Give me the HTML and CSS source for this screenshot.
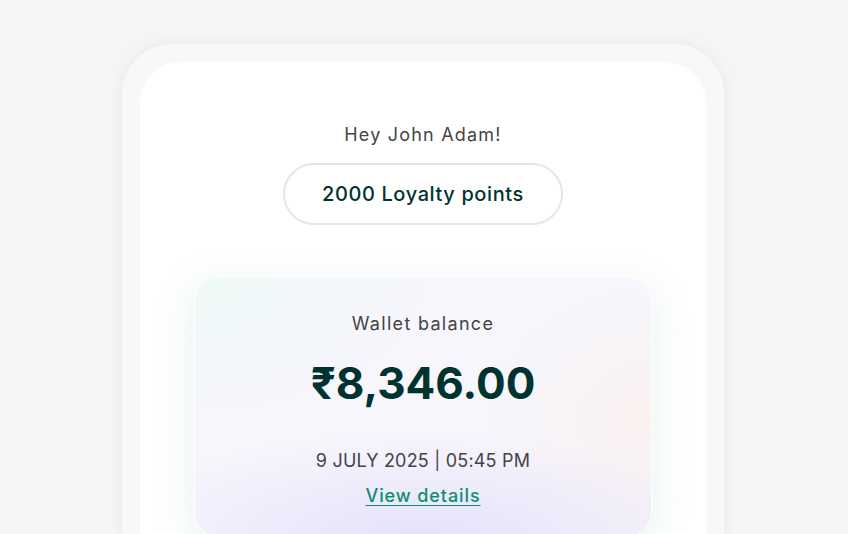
FILE: index.html
```html
<!DOCTYPE html>
<html>
<head>
  <title>Wallet</title>
  <link rel="stylesheet" href="styles.css">
</head>
<body>
  <div class="phone">
    <div class="screen">
      <p class="greeting">Hey John Adam!</p>
      <div class="points">2000 Loyalty points</div>
      <div class="wallet">
        <p class="wallet-label">Wallet balance</p>
        <p class="wallet-amount">&#8377;8,346.00</p>
        <p class="wallet-date">9 JULY 2025 | 05:45 PM</p>
        <a class="wallet-link" href="#">View details</a>
      </div>
    </div>
  </div>
</body>
</html>
```

FILE: styles.css
```css
body {
  margin: 0;
  height: 534px;
  overflow: hidden;
  font-family: Inter, "Noto Sans", sans-serif;
  background-color: #f5f5f5;
}
p {
  margin: 0;
}
.phone {
  width: 566px;
  margin: 44px auto 0;
  padding: 18px 18px 0;
  background-color: #f8f8f9;
  border-radius: 50px 50px 0 0;
  box-shadow: 0 0 14px rgba(0, 0, 0, 0.06);
  position: relative;
  left: -1px;
}
.screen {
  height: 472px;
  background-color: #ffffff;
  border-radius: 40px 40px 0 0;
  display: flex;
  flex-direction: column;
  align-items: center;
  padding-top: 61px;
  box-sizing: border-box;
}
.greeting {
  font-size: 18px;
  color: #454545;
  line-height: 24px;
  letter-spacing: 1.2px;
}
.points {
  flex-shrink: 0;
  margin-top: 16px;
  width: 276px;
  height: 58px;
  border: 2px solid #e6e6e6;
  border-radius: 31px;
  display: flex;
  align-items: center;
  justify-content: center;
  font-size: 20px;
  font-weight: 500;
  letter-spacing: 0.6px;
  color: #00332f;
}
.wallet {
  margin-top: 51px;
  width: 458px;
  height: 262px;
  flex-shrink: 0;
  border: 1px solid #ffffff;
  border-radius: 26px;
  background:
    radial-gradient(ellipse 70% 40% at 50% 100%, rgba(226, 220, 250, 0.8), rgba(226, 220, 250, 0) 100%),
    radial-gradient(ellipse 35% 50% at 100% 55%, rgba(252, 238, 234, 0.7), rgba(252, 238, 234, 0) 100%),
    radial-gradient(ellipse 50% 50% at 0% 0%, rgba(238, 250, 247, 0.9), rgba(238, 250, 247, 0) 100%),
    #f6f6fc;
  box-shadow: 0 10px 40px rgba(170, 215, 200, 0.3);
  display: flex;
  flex-direction: column;
  align-items: center;
  padding-top: 35px;
  box-sizing: border-box;
}
.wallet-label {
  font-size: 18px;
  color: #444444;
  line-height: 24px;
  letter-spacing: 1.3px;
}
.wallet-amount {
  margin-top: 21px;
  font-size: 44px;
  font-weight: 700;
  color: #00332f;
  line-height: 52px;
}
.wallet-date {
  margin-top: 40px;
  font-size: 18px;
  color: #444444;
  line-height: 24px;
  letter-spacing: 0.2px;
}
.wallet-link {
  margin-top: 11px;
  font-size: 18px;
  font-weight: 500;
  color: #0d8f6c;
  line-height: 24px;
  letter-spacing: 0.9px;
  text-decoration: underline;
  text-underline-offset: 3px;
}
```
